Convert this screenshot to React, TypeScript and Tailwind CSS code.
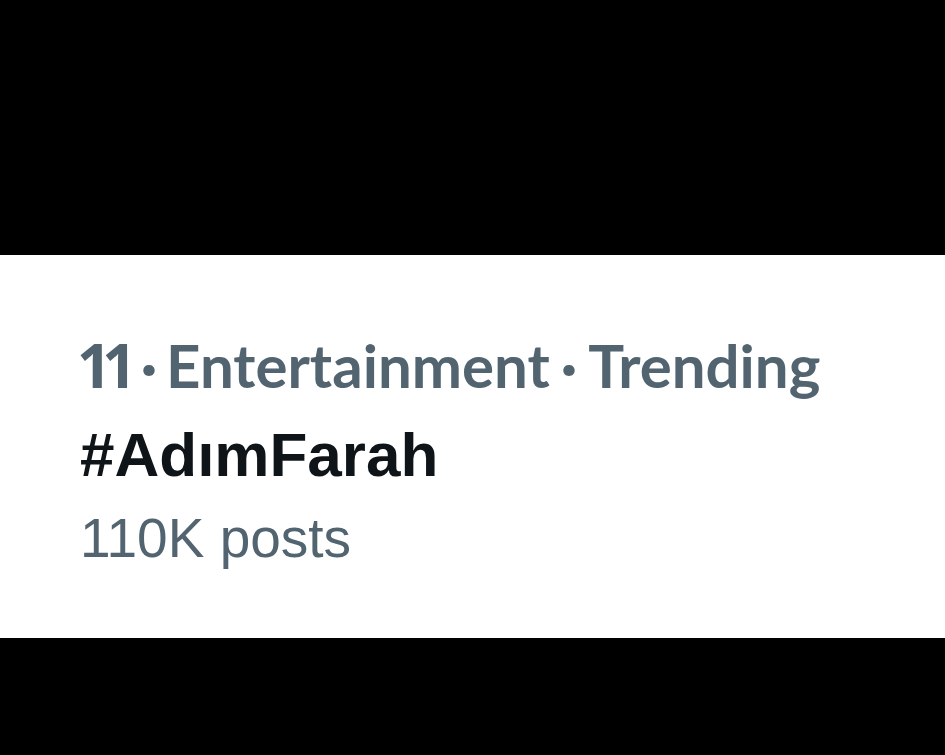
export default function App() {
  return (
    <div className="w-[945px] h-[755px] bg-black flex flex-col">
      <div className="h-[255px] shrink-0" />
      <div className="h-[383px] shrink-0 bg-white flex flex-col pl-[80px] pt-[80px]">
        <div
          className="flex items-baseline text-[60px] leading-none font-bold text-[#536471] whitespace-nowrap"
          style={{ fontFamily: "Lato, 'Open Sans', sans-serif" }}
        >
          <span className="ml-[-3px] tracking-[-9px]" style={{ fontFamily: "'Open Sans', Lato, sans-serif" }}>11</span>
          <span className="ml-[13px] mr-[9px]">·</span>
          <span>Entertainment</span>
          <span className="mx-[11px]">·</span>
          <span>Trending</span>
        </div>
        <div
          className="mt-[29px] text-[62px] leading-none font-bold text-[#0f1419] whitespace-nowrap"
          style={{ fontFamily: "'Liberation Sans', Arial, sans-serif" }}
        >
          #AdımFarah
        </div>
        <div
          className="mt-[25px] text-[55px] leading-none text-[#536471] whitespace-nowrap"
          style={{ fontFamily: "'Liberation Sans', Arial, sans-serif" }}
        >
          110K posts
        </div>
      </div>
      <div className="flex-1" />
    </div>
  );
}
